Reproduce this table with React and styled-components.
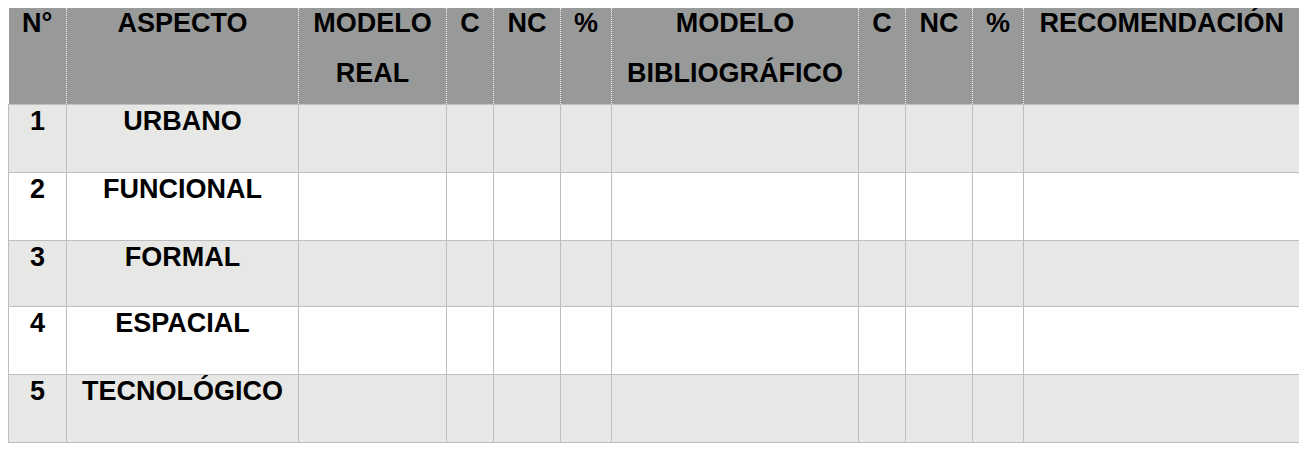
import React from 'react'
import styled, { createGlobalStyle } from 'styled-components'

const GlobalStyle = createGlobalStyle`
  body {
    margin: 8px;
    background: #fff;
    font-family: 'Liberation Sans', Arial, sans-serif;
  }
`

const columns = [58, 232, 148, 47, 67, 51, 247, 47, 67, 51, 276]

const headers = [
  ['N°'],
  ['ASPECTO'],
  ['MODELO', 'REAL'],
  ['C'],
  ['NC'],
  ['%'],
  ['MODELO', 'BIBLIOGRÁFICO'],
  ['C'],
  ['NC'],
  ['%'],
  ['RECOMENDACIÓN'],
]

const rows = [
  { n: '1', name: 'URBANO', height: 68 },
  { n: '2', name: 'FUNCIONAL', height: 68 },
  { n: '3', name: 'FORMAL', height: 66 },
  { n: '4', name: 'ESPACIAL', height: 68 },
  { n: '5', name: 'TECNOLÓGICO', height: 68 },
]

function App() {
  return (
    <>
      <GlobalStyle />
      <Table>
        <colgroup>
          {columns.map((w, i) => (
            <col key={i} style={{ width: w }} />
          ))}
        </colgroup>
        <thead>
          <HeadRow>
            {headers.map((lines, i) => (
              <HeadCell key={i} $first={i === 0}>
                {lines.map((l) => (
                  <Line key={l}>{l}</Line>
                ))}
              </HeadCell>
            ))}
          </HeadRow>
        </thead>
        <tbody>
          {rows.map((row, r) => (
            <BodyRow key={row.n} $shaded={r % 2 === 0} style={{ height: row.height }}>
              <Cell>
                <Line>{row.n}</Line>
              </Cell>
              <Cell>
                <Line>{row.name}</Line>
              </Cell>
              {columns.slice(2).map((_, i) => (
                <Cell key={i} />
              ))}
            </BodyRow>
          ))}
        </tbody>
      </Table>
    </>
  )
}

export default App

const Table = styled.table`
  width: 1291px;
  table-layout: fixed;
  border-collapse: collapse;
  border-spacing: 0;
  color: #000;
  font-size: 27px;
  font-weight: 700;
`

const HeadRow = styled.tr`
  height: 96px;
  background: #989a9a;
`

const HeadCell = styled.th`
  padding: 0;
  vertical-align: top;
  text-align: center;
  font-weight: 700;
  white-space: nowrap;
  border: none;
  border-left: ${(p) => (p.$first ? 'none' : '1px dotted rgba(255, 255, 255, 0.85)')};
`

const Line = styled.span`
  display: block;
  line-height: 30px;

  & + & {
    margin-top: 20px;
  }
`

const BodyRow = styled.tr`
  background: ${(p) => (p.$shaded ? '#e7e8e6' : '#ffffff')};
`

const Cell = styled.td`
  padding: 1px 0 0;
  vertical-align: top;
  text-align: center;
  white-space: nowrap;
  border: 1px solid #bdbebd;
`
